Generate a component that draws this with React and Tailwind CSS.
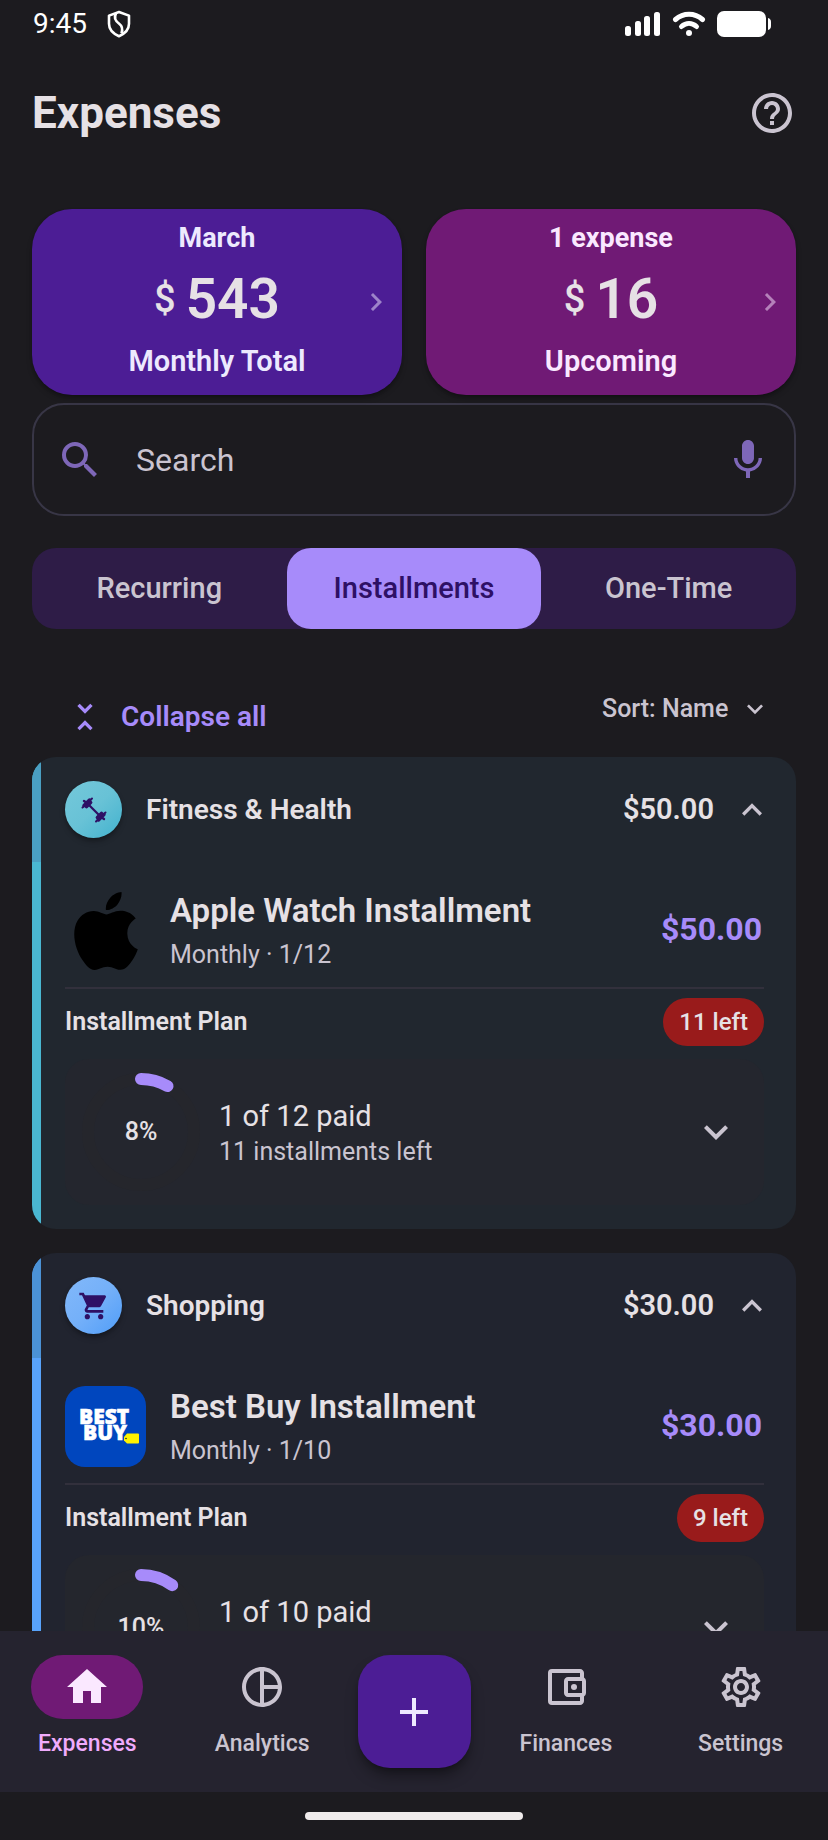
import React, { useState } from 'react';
import {
  MdHelpOutline,
  MdSearch,
  MdMic,
  MdUnfoldLess,
  MdChevronRight,
  MdExpandMore,
  MdExpandLess,
  MdShoppingCart,
  MdHome,
  MdPieChartOutline,
  MdOutlineAccountBalanceWallet,
  MdOutlineSettings,
  MdAdd,
} from 'react-icons/md';
import { SiApple } from 'react-icons/si';

const TABS = ['Recurring', 'Installments', 'One-Time'];

const DumbbellIcon = () => (
  <svg viewBox="0 0 26 26" className="h-[26px] w-[26px]" fill="none" stroke="#2e1065" strokeLinecap="round">
    <path d="M8 8l10 10" strokeWidth="2.2" />
    <path d="M1.500 10.500l3-2.500M8 4.500l3-3M15 24.500l3-3M21.500 18l3-2.500" strokeWidth="2" />
    <path d="M3 8.500l5.500-5.500M17.500 23l5.500-5.500" strokeWidth="3.4" />
    <path d="M5.500 9.500l4-4M16.500 20.500l4-4" strokeWidth="3.8" />
    <path d="M3 4l1.500 1M21.500 21l1.500 1" strokeWidth="2.4" />
  </svg>
);

const BestBuyLogo = () => (
  <svg viewBox="0 0 81 81" className="h-[81px] w-[81px] rounded-[20px] bg-[#0046be]" role="img" aria-label="Best Buy">
    <text fill="#fff" stroke="#fff" strokeWidth="0.6" fontFamily="Open Sans, sans-serif" fontWeight="800" fontSize="21">
      <tspan x="14" y="38">BEST</tspan>
      <tspan x="18" y="54">BUY</tspan>
    </text>
    <path d="M59 51l3-3.500h11a1 1 0 0 1 1 1v8a1 1 0 0 1-1 1H62l-3-3z" fill="#fff200" />
    <circle cx="61" cy="52.500" r="0.8" fill="#1d252c" />
  </svg>
);

const GROUPS = [
  {
    name: 'Fitness & Health',
    total: '$50.00',
    icon: <DumbbellIcon />,
    card: 'bg-[#21272f]',
    bar: 'bg-[#4ab7d1]',
    barTop: 'bg-[#4a9fc2]',
    badge: 'bg-linear-to-br from-[#74c8da] via-[#68c2d6] to-[#3fb2ce]',
    plan: 'bg-[#24262e]',
    logo: <SiApple className="h-[78px] w-[78px] text-black" />,
    title: 'Apple Watch Installment',
    paid: 1,
    count: 12,
  },
  {
    name: 'Shopping',
    total: '$30.00',
    icon: <MdShoppingCart className="h-8 w-8 text-[#2e1065]" />,
    card: 'bg-[#21242f]',
    bar: 'bg-[#58a3fb]',
    barTop: 'bg-[#4b92d6]',
    badge: 'bg-linear-to-br from-[#82b8fa] via-[#74b0f9] to-[#4f9df8]',
    plan: 'bg-[#24262d]',
    logo: <BestBuyLogo />,
    title: 'Best Buy Installment',
    paid: 1,
    count: 10,
  },
];

const StatusBar = () => (
  <div className="flex h-12 items-center justify-between pl-[33px] pr-14 text-white">
    <div className="flex items-center gap-5">
      <span className="text-[28px] leading-8">9:45</span>
      <svg viewBox="0 0 24 28" className="h-7 w-6" fill="none" stroke="currentColor" strokeWidth="2.6" strokeLinejoin="round">
        <path d="M12 2l10 3.600v8.200c0 5.600-4 9.800-10 12.400C6 23.600 2 19.400 2 13.800V5.600z" />
        <path d="M9 3.500c-2.600 4.500-.8 7.300 3.200 10.200 3.400 2.500 3.800 5.300 2.300 9.800" />
      </svg>
    </div>
    <div className="flex items-center gap-[11px]">
      <svg viewBox="0 0 36 26" className="h-[26px] w-9" fill="currentColor">
        <rect x="0" y="15" width="6" height="10" rx="2.500" />
        <rect x="10" y="10" width="6" height="15" rx="2.500" />
        <rect x="19" y="5" width="6" height="20" rx="2.500" />
        <rect x="29" y="1" width="6" height="24" rx="2.500" />
      </svg>
      <svg viewBox="0 0 34 26" className="h-[26px] w-[34px]" fill="none" stroke="currentColor" strokeWidth="5" strokeLinecap="round">
        <path d="M3.500 8.500c8-7 19-7 27 0" />
        <path d="M9.500 15.500c4.500-4 10.500-4 15 0" />
        <circle cx="17" cy="22" r="3" fill="currentColor" stroke="none" />
      </svg>
      <svg viewBox="0 0 55 28" className="h-7 w-[55px]" fill="currentColor">
        <rect x="0" y="1" width="49" height="26" rx="7" />
        <path d="M51 8c2 .5 3 2 3 4v4c0 2-1 3.500-3 4z" />
      </svg>
    </div>
  </div>
);

const SummaryCard = ({ label, amount, caption, className }) => (
  <button className={`relative flex flex-1 flex-col items-center rounded-[40px] px-6 pb-4 pt-[11px] shadow-md shadow-black/30 ${className}`}>
    <span className="text-[27px] font-bold leading-9">{label}</span>
    <span className="my-2.5 flex items-center gap-2.5 text-[#e6e1e5]">
      <span className="text-[38px] font-medium leading-[67px]">$</span>
      <span className="text-[55px] font-semibold leading-[67px]">{amount}</span>
    </span>
    <span className="text-[29px] font-semibold leading-9">{caption}</span>
    <MdChevronRight className="absolute right-2 top-1/2 h-9 w-9 -translate-y-1/2 opacity-50" />
  </button>
);

const ProgressRing = ({ paid, count }) => {
  const share = paid / count;
  const length = 2 * Math.PI * 53;
  return (
    <div className="relative flex h-30 w-30 items-center justify-center">
      <svg viewBox="0 0 120 120" className="absolute inset-0 -rotate-90" fill="none" strokeWidth="12">
        <circle cx="60" cy="60" r="53" stroke="#25262c" />
        <circle
          cx="60"
          cy="60"
          r="53"
          stroke="#a78bfa"
          strokeLinecap="round"
          strokeDasharray={`${length * share} ${length}`}
        />
      </svg>
      <span className="relative text-[25px] font-medium">{Math.round(share * 100)}%</span>
    </div>
  );
};

const ExpenseGroup = ({ group }) => {
  const { name, total, icon, card, bar, barTop, badge, plan, logo, title, paid, count } = group;
  const left = count - paid;
  return (
    <section className={`flex shrink-0 overflow-hidden rounded-3xl ${card}`}>
      <div className={`w-[9px] shrink-0 ${bar}`}>
        <div className={`h-[105px] ${barTop}`} />
      </div>
      <div className="min-w-0 flex-1 pb-6 pl-6 pr-8">
        <div className="flex h-[105px] items-center">
          <span className={`flex h-[57px] w-[57px] items-center justify-center rounded-full shadow-md shadow-black/30 ${badge}`}>
            {icon}
          </span>
          <h2 className="ml-6 flex-1 text-[28px] font-semibold leading-9">{name}</h2>
          <span className="text-[29px] font-semibold">{total}</span>
          <button aria-label={`Collapse ${name}`} className="-mr-2 ml-[18px] text-[#cac4d0]">
            <MdExpandLess className="h-10 w-10" />
          </button>
        </div>

        <div className="flex h-[127px] items-center border-b-2 border-[#32303c] pt-3">
          <div className="flex h-[81px] w-[81px] items-center justify-center">{logo}</div>
          <div className="ml-6 flex-1 pt-0.5">
            <h3 className="text-[33px] font-semibold leading-10">{title}</h3>
            <p className="mt-1.5 text-[25px] leading-9 text-[#cac4d0]">
              Monthly · {paid}/{count}
            </p>
          </div>
          <span className="pb-1 pr-0.5 text-[32px] font-bold text-[#a78bfa]">{total}</span>
        </div>

        <div className="mt-2 flex h-[50px] items-center justify-between">
          <h4 className="text-[25px] font-semibold">Installment Plan</h4>
          <span className="rounded-3xl bg-[#991b1b] px-4 py-2 text-[24px] font-medium leading-8">{left} left</span>
        </div>

        <div className={`mt-3 flex h-[146px] items-center rounded-3xl pl-4 pr-6 ${plan}`}>
          <ProgressRing paid={paid} count={count} />
          <div className="ml-[18px] flex-1">
            <p className="text-[29px] leading-10">
              {paid} of {count} paid
            </p>
            <p className="text-[25px] leading-8 text-[#cac4d0]">{left} installments left</p>
          </div>
          <button aria-label={`Show ${title} plan`} className="text-[#cac4d0]">
            <MdExpandMore className="h-12 w-12" />
          </button>
        </div>
      </div>
    </section>
  );
};

const NavItem = ({ icon: Icon, label, active }) => (
  <a href="#" className="flex flex-1 flex-col items-center">
    <span className={`flex h-16 w-28 items-center justify-center rounded-full ${active ? 'bg-[#701a75] text-[#fae8ff]' : 'text-[#cac4d0]'}`}>
      <Icon className="h-12 w-12" />
    </span>
    <span className={`mt-[9px] text-[23px] font-medium leading-8 ${active ? 'text-[#f0abfc]' : 'text-[#cac4d0]'}`}>{label}</span>
  </a>
);

const App = () => {
  const [tab, setTab] = useState('Installments');

  return (
    <div className="flex h-screen flex-col bg-[#1c1b1f] font-[Roboto,sans-serif] text-[#e6e1e5]">
      <StatusBar />

      <header className="flex h-[129px] shrink-0 items-center justify-between px-8">
        <h1 className="text-[44px] font-bold leading-[52px]">Expenses</h1>
        <button aria-label="Help" className="text-[#cac4d0]">
          <MdHelpOutline className="h-12 w-12" />
        </button>
      </header>

      <main className="flex min-h-0 flex-1 flex-col overflow-hidden px-8 pt-8">
        <div className="flex shrink-0 gap-6">
          <SummaryCard label="March" amount="543" caption="Monthly Total" className="bg-[#4c1d95] text-[#ede9fe]" />
          <SummaryCard label="1 expense" amount="16" caption="Upcoming" className="bg-[#701a75] text-[#fae8ff]" />
        </div>

        <div className="mt-2 flex h-[113px] shrink-0 items-center rounded-[32px] border-2 border-[#383646] px-[22px]">
          <MdSearch className="h-12 w-12 text-[#7e67b8]" />
          <input
            type="text"
            aria-label="Search"
            placeholder="Search"
            className="ml-8 min-w-0 flex-1 bg-transparent text-[32px] outline-none placeholder:text-[#cac4d0]"
          />
          <button aria-label="Voice search" className="text-[#7e67b8]">
            <MdMic className="h-12 w-12" />
          </button>
        </div>

        <div role="tablist" className="mt-8 flex h-[81px] shrink-0 rounded-3xl bg-[#2e1c47]">
          {TABS.map((name) => (
            <button
              key={name}
              role="tab"
              aria-selected={tab === name}
              onClick={() => setTab(name)}
              className={`flex-1 rounded-3xl text-[29px] font-medium ${tab === name ? 'bg-[#a78bfa] text-[#2e1065]' : 'text-[#cac4d0]'}`}
            >
              {name}
            </button>
          ))}
        </div>

        <div className="mt-10 flex shrink-0 items-start justify-between pl-[33px] pr-[25px]">
          <button className="mt-2 flex h-20 items-center gap-4 text-[28px] font-semibold text-[#a78bfa]">
            <MdUnfoldLess className="h-10 w-10" />
            Collapse all
          </button>
          <div className="flex h-20 items-center gap-2.5 text-[#cac4d0]">
            <select aria-label="Sort" className="appearance-none bg-transparent text-[25px] font-medium outline-none">
              <option>Sort: Name</option>
              <option>Sort: Cost</option>
              <option>Sort: Date</option>
            </select>
            <MdExpandMore className="pointer-events-none h-8 w-8" />
          </div>
        </div>

        <div className="flex flex-col gap-6">
          {GROUPS.map((group) => (
            <ExpenseGroup key={group.name} group={group} />
          ))}
        </div>
      </main>

      <nav className="flex shrink-0 items-start bg-[#25232f] py-6">
        <NavItem icon={MdHome} label="Expenses" active />
        <NavItem icon={MdPieChartOutline} label="Analytics" />
        <button aria-label="Add expense" className="mx-2 flex h-[113px] w-[113px] items-center justify-center rounded-[32px] bg-[#4c1d95] text-[#ede9fe] shadow-lg shadow-black/40">
          <MdAdd className="h-12 w-12" />
        </button>
        <NavItem icon={MdOutlineAccountBalanceWallet} label="Finances" />
        <NavItem icon={MdOutlineSettings} label="Settings" />
      </nav>

      <div className="flex h-12 shrink-0 items-center justify-center">
        <div className="h-2 w-[218px] rounded-full bg-[#f0ecec]" />
      </div>
    </div>
  );
};

export default App;
